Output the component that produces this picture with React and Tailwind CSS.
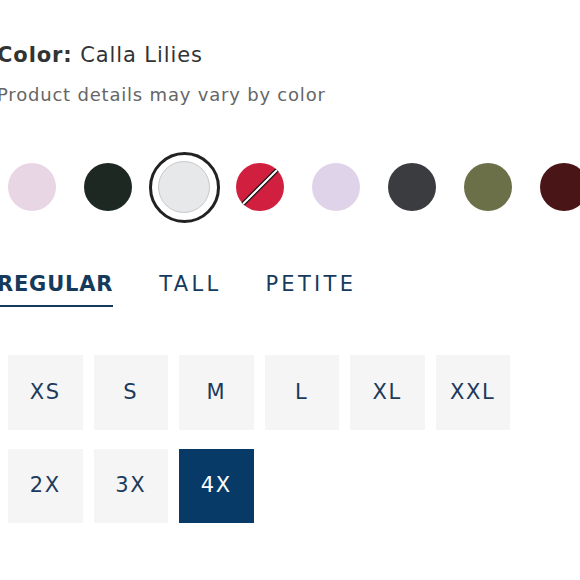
import { useState } from "react";

const swatches = [
  { name: "Blush", color: "bg-[#e9d6e4]" },
  { name: "Forest", color: "bg-[#1e2822]" },
  { name: "Calla Lilies", color: "bg-[#e7e8ea]", selected: true },
  { name: "Red", color: "bg-[#d1203f]", soldOut: true },
  { name: "Lilac", color: "bg-[#dfd3ea]" },
  { name: "Charcoal", color: "bg-[#3a3c3f]" },
  { name: "Olive", color: "bg-[#6c7048]" },
  { name: "Maroon", color: "bg-[#4a1517]" },
];

const fits = ["REGULAR", "TALL", "PETITE"];
const sizes = ["XS", "S", "M", "L", "XL", "XXL", "2X", "3X", "4X"];

function Swatch({ swatch }) {
  if (swatch.selected) {
    return (
      <div className="w-[48px] h-[48px] flex items-center justify-center shrink-0">
        <div className="w-[71px] h-[71px] shrink-0 rounded-full border-[3px] border-[#222] flex items-center justify-center">
          <div className={`w-[52px] h-[52px] rounded-full border border-[#c9c9c9] ${swatch.color}`}></div>
        </div>
      </div>
    );
  }
  return (
    <div className={`relative w-[48px] h-[48px] rounded-full shrink-0 ${swatch.color}`}>
      {swatch.soldOut && (
        <svg className="absolute inset-0" width="48" height="48" viewBox="0 0 48 48">
          <line x1="7" y1="41" x2="41" y2="7" stroke="#111" strokeWidth="4.5" />
          <line x1="7" y1="41" x2="41" y2="7" stroke="#fff" strokeWidth="2" />
        </svg>
      )}
    </div>
  );
}

export default function App() {
  const [fit, setFit] = useState("REGULAR");
  const [size, setSize] = useState("4X");

  return (
    <div className="w-[580px] h-[580px] overflow-hidden bg-white font-['DejaVu_Sans',sans-serif]">
      <div className="pt-[40px] ml-[-3px]">
        <h2 className="text-[21px] leading-[30px] text-[#333] tracking-[0.9px]">
          <span className="font-bold">Color:</span> Calla Lilies
        </h2>
        <p className="mt-[12px] text-[18px] leading-[26px] text-[#666] tracking-[0.8px]">
          Product details may vary by color
        </p>
      </div>

      <div className="mt-[55px] pl-[8px] flex gap-[28px] items-center">
        {swatches.map((s) => (
          <Swatch key={s.name} swatch={s} />
        ))}
      </div>

      <div className="mt-[59px] ml-[-3px] flex gap-[44px]">
        {fits.map((f) => (
          <button
            key={f}
            onClick={() => setFit(f)}
            className={`pb-[7px] text-[21px] leading-[28px] text-[#163a5c] border-b-2 ${
              f === fit
                ? "font-semibold tracking-[0.8px] mr-[2px] border-[#163a5c]"
                : "tracking-[3.3px] border-transparent"
            }`}
          >
            {f}
          </button>
        ))}
      </div>

      <div className="mt-[48px] pl-[8px] grid grid-cols-[repeat(6,74.5px)] gap-x-[11px] gap-y-[19px]">
        {sizes.map((s) => (
          <button
            key={s}
            onClick={() => setSize(s)}
            className={`h-[74.5px] flex items-center justify-center text-[21px] tracking-[1.6px] ${
              s === size ? "bg-[#083a68] text-white" : "bg-[#f5f5f5] text-[#1b3a5c]"
            }`}
          >
            {s}
          </button>
        ))}
      </div>
    </div>
  );
}
